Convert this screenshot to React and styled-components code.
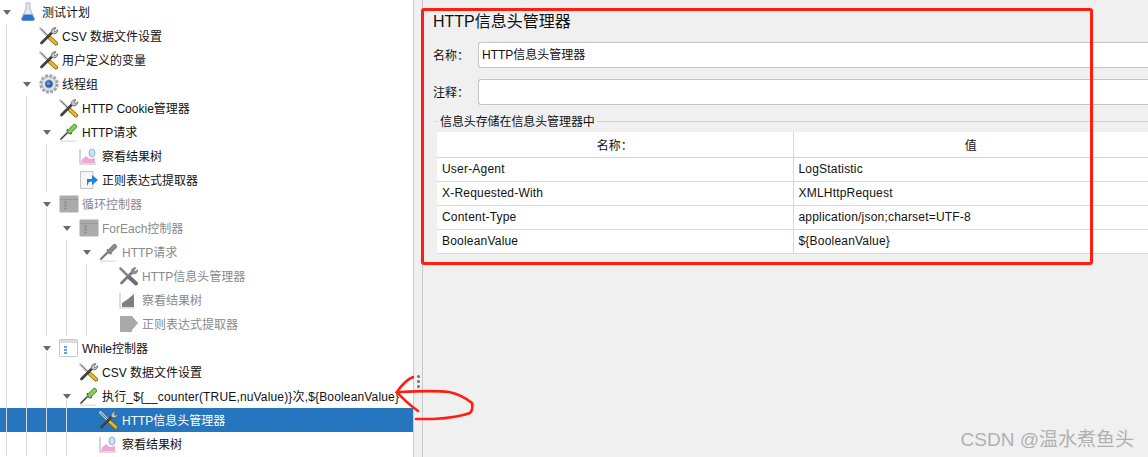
import React from "react";
import styled, { createGlobalStyle } from "styled-components";

const GlobalStyle = createGlobalStyle`
  html, body {
    margin: 0;
    padding: 0;
    background: #f0f0f0;
  }
`;

const FONT = `"Liberation Sans", "Noto Sans CJK SC", sans-serif`;

const TREE = [
  { level: 0, open: true, icon: "flask", text: "测试计划" },
  { level: 1, icon: "tools", text: "CSV 数据文件设置" },
  { level: 1, icon: "tools", text: "用户定义的变量" },
  { level: 1, open: true, icon: "gear", text: "线程组" },
  { level: 2, icon: "tools", text: "HTTP Cookie管理器" },
  { level: 2, open: true, icon: "dropper", text: "HTTP请求" },
  { level: 3, icon: "chart", text: "察看结果树" },
  { level: 3, icon: "extract", text: "正则表达式提取器" },
  { level: 2, open: true, tail: true, icon: "box", text: "循环控制器", off: true },
  { level: 3, open: true, icon: "box", text: "ForEach控制器", off: true },
  { level: 4, open: true, icon: "dropper", text: "HTTP请求", off: true },
  { level: 5, icon: "tools", text: "HTTP信息头管理器", off: true },
  { level: 5, icon: "chart", text: "察看结果树", off: true },
  { level: 5, icon: "extract", text: "正则表达式提取器", off: true },
  { level: 2, open: true, tail: true, icon: "box", text: "While控制器" },
  { level: 3, icon: "tools", text: "CSV 数据文件设置" },
  { level: 3, open: true, tail: true, wide: true, icon: "dropper", text: "执行_${__counter(TRUE,nuValue)}次,${BooleanValue}" },
  { level: 4, icon: "tools", text: "HTTP信息头管理器", selected: true },
  { level: 4, icon: "chart", text: "察看结果树" },
];

const HEADERS = [
  ["User-Agent", "LogStatistic"],
  ["X-Requested-With", "XMLHttpRequest"],
  ["Content-Type", "application/json;charset=UTF-8"],
  ["BooleanValue", "${BooleanValue}"],
];

function ToolsIcon({ off }) {
  const handle = off ? "#6f6f6f" : "#eeb91e";
  const metal = off ? "#7a7a7a" : "#5a5d60";
  const light = off ? "#8f8f8f" : "#c4c8cc";
  return (
    <svg width="21" height="20" viewBox="1 0 21 20">
      <path d="M2.5 2.5 L11 11" stroke={light} strokeWidth="2.6" strokeLinecap="round" />
      <path d="M3 3 L11 11" stroke={metal} strokeWidth="0.8" />
      <path d="M11.5 11.5 L18 17.5" stroke={off ? handle : "#7a5f14"} strokeWidth="4" strokeLinecap="round" />
      <path d="M11.8 11.8 L17.8 17.3" stroke={handle} strokeWidth="2.6" strokeLinecap="round" />
      <path d="M3.5 17 L13.5 7" stroke={off ? "#7a7a7a" : "#3f4245"} strokeWidth="2.8" strokeLinecap="round" />
      <path d="M13.5 7 C12.4 3.8 15 1.2 18 1.8 L16 4.2 L17.2 5.6 L19.6 3.8 C20 7 17 9 13.5 7Z" fill={light} stroke={metal} strokeWidth="0.8" />
    </svg>
  );
}

function FlaskIcon() {
  return (
    <svg width="17" height="20" viewBox="-2 0 17 20">
      <path d="M5 1 L5 7 L0.4 16.5 C0 18 1 18.6 2 18.6 L12 18.6 C13 18.6 14 18 13.6 16.5 L9 7 L9 1 Z" fill="#e4e9ef" stroke="#a3abb4" strokeWidth="0.9" />
      <path d="M2.9 12.5 L11.1 12.5 L13.3 17 C13.5 18 12.8 18.4 12 18.4 L2 18.4 C1.2 18.4 0.5 18 0.7 17 Z" fill="#2a72d0" />
    </svg>
  );
}

function GearIcon() {
  return (
    <svg width="20" height="20" viewBox="0 0 20 20">
      <circle cx="10" cy="10" r="8.2" fill="none" stroke="#a3a8af" strokeWidth="3" strokeDasharray="3 1.3" />
      <circle cx="10" cy="10" r="7" fill="#e6e8eb" stroke="#9a9fa6" strokeWidth="0.8" />
      <circle cx="10" cy="10" r="4.2" fill="#2f5fa8" stroke="#b9c6d8" strokeWidth="1" />
      <circle cx="9.4" cy="9.4" r="1.6" fill="#6f9bd8" />
    </svg>
  );
}

function DropperIcon({ off }) {
  const tip = off ? "#6a6a6a" : "#2a2a2a";
  return (
    <svg width="20" height="19" viewBox="0 0 20 19">
      <path d="M1 18.2 L17 18.2" stroke="#dadada" strokeWidth="1.2" />
      <path d="M1.5 16.5 L9.5 8.5" stroke={off ? "#8a8a8a" : "#9a9ea2"} strokeWidth="2.4" />
      <path d="M1.5 16.5 L9.5 8.5" stroke={tip} strokeWidth="1" />
      <path d="M8 6.5 L12.5 11" stroke={off ? "#777" : "#3a3a3a"} strokeWidth="2" />
      <path d="M10.5 8.5 L15.5 3.5" stroke={off ? "#8a8a8a" : "#4f9a2e"} strokeWidth="5" strokeLinecap="round" />
      <path d="M10.8 8.2 L15.5 3.5" stroke={off ? "#8a8a8a" : "#86cc58"} strokeWidth="3.2" strokeLinecap="round" />
    </svg>
  );
}

function ChartIcon({ off }) {
  if (off) {
    return (
      <svg width="20" height="18" viewBox="0 0 20 18">
        <path d="M1 2 L1 17 L16 17" fill="none" stroke="#c8c8c8" strokeWidth="1.2" />
        <path d="M3 16 L3 12 L9 8 L15 3 L15 16 Z" fill="#7f7f7f" />
      </svg>
    );
  }
  return (
    <svg width="20" height="18" viewBox="0 0 20 18">
      <path d="M1 2 L1 17 L17 17" fill="none" stroke="#b8b8b8" strokeWidth="1.2" />
      <path d="M2.5 16 L2.5 13 L7 9 L11 12 L16 11 L16 16 Z" fill="#f0a8d8" />
      <ellipse cx="13" cy="6" rx="3" ry="4" fill="#cfe0f5" stroke="#7da6d8" strokeWidth="0.8" />
    </svg>
  );
}

function ExtractIcon({ off }) {
  if (off) {
    return (
      <svg width="20" height="20" viewBox="0 0 20 20">
        <path d="M1 2 L13 2 L19 9 L13 16 L13 18 L1 18 Z" fill="#a9a9a9" />
      </svg>
    );
  }
  return (
    <svg width="20" height="20" viewBox="0 0 20 20">
      <path d="M1.5 1.5 L14 1.5 L14 18.5 L1.5 18.5 Z" fill="#f6f6f6" stroke="#c4c4c4" />
      <path d="M8 9 L13 9 L13 5 L19 10 L13 15 L13 11.5 L10 12 L8 16 Z" fill="#1f7fe0" />
    </svg>
  );
}

function BoxIcon({ off }) {
  if (off) {
    return (
      <svg width="20" height="18" viewBox="0 0 20 18">
        <rect x="0.5" y="0.5" width="19" height="17" rx="1" fill="#ababab" />
        <path d="M1 4.5 L19 4.5" stroke="#9a9a9a" />
        <path d="M5 7.5 H8 M5 10.5 H8 M5 13.5 H8" stroke="#8c8c8c" strokeWidth="1.4" />
      </svg>
    );
  }
  return (
    <svg width="20" height="18" viewBox="0 0 20 18">
      <rect x="0.5" y="0.5" width="18" height="17" rx="1" fill="#fff" stroke="#c6c6c6" />
      <path d="M1 2.5 L18 2.5" stroke="#dcdcdc" strokeWidth="3" />
      <path d="M5 8 H8 M5 11 H8 M5 14 H8" stroke="#2f86d8" strokeWidth="1.6" />
    </svg>
  );
}

const ICONS = {
  tools: ToolsIcon,
  flask: FlaskIcon,
  gear: GearIcon,
  dropper: DropperIcon,
  chart: ChartIcon,
  extract: ExtractIcon,
  box: BoxIcon,
};

function TreeRow({ item }) {
  const Icon = ICONS[item.icon];
  const guides = [];
  for (let i = 0; i < item.level; i++) {
    guides.push(<Guide key={i} />);
  }
  return (
    <Row $selected={item.selected}>
      {guides}
      <ArrowCell $tail={item.tail}>{item.open && <Arrow />}</ArrowCell>
      <IconCell>
        <Icon off={item.off} />
      </IconCell>
      <Label $off={item.off} $selected={item.selected} $wide={item.wide}>
        {item.text}
      </Label>
    </Row>
  );
}

export default function App() {
  return (
    <Page>
      <GlobalStyle />
      <Tree>
        {TREE.map((item, index) => (
          <TreeRow item={item} key={index} />
        ))}
      </Tree>
      <Splitter>
        <Dot />
        <Dot />
        <Dot />
      </Splitter>
      <Panel>
        <Title>HTTP信息头管理器</Title>
        <Field>
          <FieldLabel>名称：</FieldLabel>
          <Input>HTTP信息头管理器</Input>
        </Field>
        <Field>
          <FieldLabel>注释：</FieldLabel>
          <Input />
        </Field>
        <Group>
          <Legend>
            <LegendTick />
            <LegendText>信息头存储在信息头管理器中</LegendText>
            <LegendLine />
          </Legend>
          <Table>
            <thead>
              <tr>
                <HeadCell>名称：</HeadCell>
                <HeadCell>值</HeadCell>
              </tr>
            </thead>
            <tbody>
              {HEADERS.map(([name, value]) => (
                <tr key={name}>
                  <Cell>{name}</Cell>
                  <Cell>{value}</Cell>
                </tr>
              ))}
            </tbody>
          </Table>
        </Group>
      </Panel>
      <RedBox />
      <Scribble width="90" height="60" viewBox="390 370 90 60">
        <path
          d="M413 377 C408 379 403 383 397 392 C401 397 410 405 418 411"
          fill="none"
          stroke="#ff1e10"
          strokeWidth="2.6"
          strokeLinecap="round"
        />
        <path
          d="M400 392 C420 391 440 391 449 392 C458 394 466 398 472 403 C473 408 472 411 470 413 C462 416 450 418 433 419 L416 419"
          fill="none"
          stroke="#ff1e10"
          strokeWidth="2.6"
          strokeLinecap="round"
        />
      </Scribble>
      <Watermark>CSDN @温水煮鱼头</Watermark>
    </Page>
  );
}

const Page = styled.div`
  position: relative;
  display: flex;
  width: 1148px;
  height: 457px;
  overflow: hidden;
  background: #f0f0f0;
  font-family: ${FONT};
  font-size: 12px;
  color: #111;
`;

const Tree = styled.div`
  width: 413px;
  flex-shrink: 0;
  background: #fff;
  overflow: hidden;
`;

const Row = styled.div`
  display: flex;
  align-items: center;
  height: 24px;
  background: ${(p) => (p.$selected ? "#2675bf" : "transparent")};
`;

const Guide = styled.span`
  align-self: stretch;
  flex-shrink: 0;
  width: 14px;
  margin-left: 6px;
  border-left: 1px solid #d9d9d9;
  box-sizing: border-box;
`;

const ArrowCell = styled.span`
  position: relative;
  display: flex;
  align-items: center;
  align-self: stretch;
  flex-shrink: 0;
  width: 20px;
  padding-left: 3px;
  box-sizing: border-box;

  &::after {
    content: "";
    display: ${(p) => (p.$tail ? "block" : "none")};
    position: absolute;
    left: 6px;
    bottom: 0;
    width: 1px;
    height: 8px;
    background: #d9d9d9;
  }
`;

const Arrow = styled.span`
  display: block;
  width: 0;
  height: 0;
  border-left: 4px solid transparent;
  border-right: 4px solid transparent;
  border-top: 5px solid #6a6a6a;
`;

const IconCell = styled.span`
  display: flex;
  align-items: center;
  flex-shrink: 0;
  width: 23px;
  margin-left: -1px;
`;

const Label = styled.span`
  padding-bottom: 2px;
  white-space: nowrap;
  letter-spacing: ${(p) => (p.$wide ? "0.16px" : "0")};
  color: ${(p) => (p.$selected ? "#fff" : p.$off ? "#8a8a8a" : "#111")};
`;

const Splitter = styled.div`
  display: flex;
  flex-direction: column;
  align-items: center;
  gap: 2px;
  width: 10px;
  flex-shrink: 0;
  padding-top: 375px;
  box-sizing: border-box;
  border-left: 1px solid #c9c9c9;
  border-right: 1px solid #c9c9c9;
`;

const Dot = styled.span`
  width: 3px;
  height: 3px;
  border-radius: 50%;
  background: #6f6f6f;
`;

const Panel = styled.div`
  flex: 1;
  min-width: 0;
  padding: 12px 0 0 10px;
`;

const Title = styled.div`
  height: 20px;
  line-height: 20px;
  margin-bottom: 10px;
  font-size: 16px;
`;

const Field = styled.div`
  display: flex;
  align-items: center;
  height: 26px;
  margin-bottom: 11px;
`;

const FieldLabel = styled.span`
  width: 45px;
  flex-shrink: 0;
  padding-bottom: 2px;
`;

const Input = styled.div`
  flex: 1;
  height: 26px;
  line-height: 24px;
  padding-left: 3px;
  box-sizing: border-box;
  background: #fff;
  border: 1px solid #c4c4c4;
  border-right: none;
  border-radius: 3px 0 0 3px;
`;

const Group = styled.div`
  margin: -6px 0 0 2px;
`;

const Legend = styled.div`
  display: flex;
  align-items: center;
  gap: 2px;
  height: 22px;
`;

const LegendTick = styled.span`
  width: 3px;
  height: 1px;
  background: #cfcfcf;
`;

const LegendText = styled.span`
  padding-bottom: 2px;
  letter-spacing: -0.1px;
`;

const LegendLine = styled.span`
  flex: 1;
  height: 1px;
  background: #cfcfcf;
`;

const Table = styled.table`
  width: 711px;
  margin-left: 2px;
  border-collapse: collapse;
  table-layout: fixed;
  background: #fff;
  font-size: 12px;

  th:first-child,
  td:first-child {
    width: 356px;
    border-right: 1px solid #d9d9d9;
  }
`;

const HeadCell = styled.th`
  height: 25px;
  padding: 0;
  font-weight: normal;
  text-align: center;
  border-bottom: 1px solid #d4d4d4;
  box-sizing: border-box;
`;

const Cell = styled.td`
  height: 24px;
  padding: 0 0 0 5px;
  letter-spacing: 0.2px;
  border-bottom: 1px solid #d9d9d9;
  box-sizing: border-box;
`;

const RedBox = styled.div`
  position: absolute;
  left: 421px;
  top: 8px;
  width: 672px;
  height: 257px;
  box-sizing: border-box;
  border: 3px solid #ff1e10;
  border-radius: 3px;
`;

const Scribble = styled.svg`
  position: absolute;
  left: 390px;
  top: 370px;
`;

const Watermark = styled.div`
  position: absolute;
  right: 14px;
  top: 428px;
  font-size: 19px;
  line-height: 24px;
  color: #b0b0b0;
  white-space: nowrap;
`;
